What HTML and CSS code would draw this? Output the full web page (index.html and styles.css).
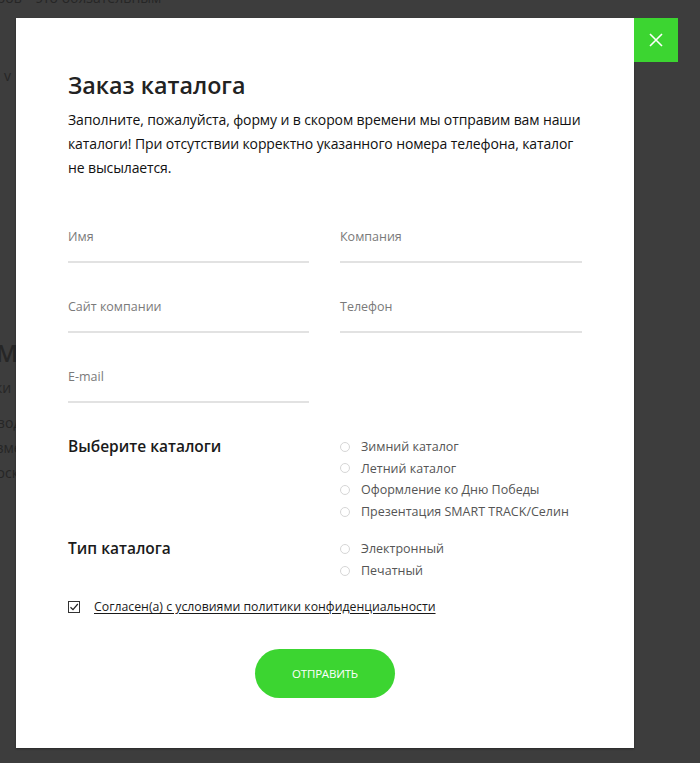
FILE: index.html
```html
<!DOCTYPE html>
<html lang="ru">
<head>
<meta charset="utf-8">
<title>Заказ каталога</title>
<link rel="stylesheet" href="styles.css">
</head>
<body>
<div class="bg-topstrip">
  <p class="bg-top">Подарки для ваших клиентов и партнёров – это обязательным</p>
</div>
<div class="bg-left">
  <p class="bg-v">v</p>
  <h2 class="bg-h">М</h2>
  <p class="bg-line bg-l1">Подарки</p>
  <p class="bg-line bg-l2">Производство</p>
  <p class="bg-line bg-l3">Изменения</p>
  <p class="bg-line bg-l4">Московское</p>
</div>
<div class="overlay">
  <div class="modal">
    <button class="close" type="button" aria-label="Закрыть">
      <svg width="14" height="14" viewBox="0 0 14 14"><path d="M1 1L13 13M13 1L1 13" stroke="#fff" stroke-width="1.6" fill="none"/></svg>
    </button>
    <h1 class="title">Заказ каталога</h1>
    <p class="intro">Заполните, пожалуйста, форму и в скором времени мы отправим вам наши каталоги! При отсутствии корректно указанного номера телефона, каталог не высылается.</p>
    <div class="fields">
      <div class="field"><span class="label">Имя</span></div>
      <div class="field"><span class="label">Компания</span></div>
      <div class="field"><span class="label">Сайт компании</span></div>
      <div class="field"><span class="label">Телефон</span></div>
      <div class="field"><span class="label">E-mail</span></div>
    </div>
    <div class="group group-first">
      <h3 class="group-title">Выберите каталоги</h3>
      <ul class="options">
        <li class="option"><span class="radio"></span>Зимний каталог</li>
        <li class="option"><span class="radio"></span>Летний каталог</li>
        <li class="option"><span class="radio"></span>Оформление ко Дню Победы</li>
        <li class="option"><span class="radio"></span>Презентация SMART TRACK/Селин</li>
      </ul>
    </div>
    <div class="group">
      <h3 class="group-title">Тип каталога</h3>
      <ul class="options">
        <li class="option"><span class="radio"></span>Электронный</li>
        <li class="option"><span class="radio"></span>Печатный</li>
      </ul>
    </div>
    <div class="agree">
      <span class="checkbox">
        <svg width="10" height="10" viewBox="0 0 10 10"><path d="M1.5 5.2L4 7.6L8.8 2" stroke="#222" stroke-width="1.2" fill="none"/></svg>
      </span>
      <span class="agree-text">Согласен(а) с условиями политики конфиденциальности</span>
    </div>
    <div class="actions">
      <button class="submit" type="button">ОТПРАВИТЬ</button>
    </div>
  </div>
</div>
</body>
</html>
```
FILE: styles.css
```css
* { box-sizing: border-box; }
html, body { margin: 0; padding: 0; }
body {
  width: 700px;
  height: 763px;
  overflow: hidden;
  background: #3d3d3d;
  font-family: "Open Sans", "Noto Sans", sans-serif;
  position: relative;
}
.bg-topstrip {
  height: 18px;
  overflow: hidden;
  position: relative;
  color: #262626;
}
.bg-left {
  position: absolute;
  left: 0;
  top: 18px;
  width: 16px;
  height: 745px;
  overflow: hidden;
  color: #262626;
}
.bg-topstrip p, .bg-left p, .bg-left h2 { margin: 0; position: absolute; white-space: nowrap; }
.bg-top { top: -12px; left: -270px; font-size: 14px; }
.bg-v { top: 48px; left: 4px; font-size: 14px; }
.bg-h { top: 318px; left: -4px; font-size: 24px; font-weight: 600; }
.bg-line { font-size: 14px; }
.bg-l1 { top: 360px; left: -48px; }
.bg-l2 { top: 395px; left: -46px; }
.bg-l3 { top: 420px; left: -14px; }
.bg-l4 { top: 445px; left: -16px; }

.overlay {
  position: absolute;
  inset: 0;
  padding: 18px 0 0 16px;
}
.modal {
  position: relative;
  width: 618px;
  height: 730px;
  background: #fff;
  padding: 52px 52px 0 52px;
  box-shadow: 0 1px 2px rgba(0,0,0,0.35);
}
.close {
  position: absolute;
  top: 0;
  right: -44px;
  width: 44px;
  height: 44px;
  border: 0;
  padding: 0;
  background: #3cd531;
  display: flex;
  align-items: center;
  justify-content: center;
}
.title {
  margin: 0;
  font-size: 23.3px;
  line-height: 30px;
  font-weight: 600;
  color: #222;
}
.intro {
  margin: 8px 0 0;
  font-size: 14px;
  line-height: 24px;
  letter-spacing: -0.12px;
  color: #111;
}
.fields {
  margin-top: 37px;
  display: grid;
  grid-template-columns: 241px 242px;
  column-gap: 31px;
  row-gap: 24px;
}
.field {
  padding: 10px 0 14px;
  border-bottom: 2px solid #e2e2e2;
}
.label {
  display: block;
  font-size: 12.5px;
  line-height: 20px;
  color: #7a7a7a;
}
.group {
  margin-top: 15px;
  display: grid;
  grid-template-columns: 272px 1fr;
}
.group-first { margin-top: 32px; }
.group-title {
  margin: 0;
  font-size: 15.5px;
  line-height: 22px;
  font-weight: 600;
  color: #1a1a1a;
}
.options {
  list-style: none;
  margin: 0;
  padding: 1px 0 0;
}
.option {
  display: flex;
  align-items: center;
  font-size: 12.5px;
  line-height: 21.6px;
  color: #555;
}
.radio {
  width: 10px;
  height: 10px;
  border: 1px solid #d6d6d6;
  border-radius: 50%;
  margin-right: 11px;
  flex: none;
}
.agree {
  margin-top: 15px;
  display: flex;
  align-items: center;
  height: 20px;
}
.checkbox {
  width: 12px;
  height: 12px;
  border: 1px solid #333;
  display: flex;
  align-items: center;
  justify-content: center;
  margin-right: 14px;
  flex: none;
}
.agree-text {
  font-size: 12.3px;
  line-height: 20px;
  color: #1a1a1a;
  text-decoration: underline;
  text-underline-offset: 2px;
}
.actions {
  margin-top: 32px;
  display: flex;
  justify-content: center;
}
.submit {
  width: 140px;
  height: 49px;
  border: 0;
  border-radius: 25px;
  background: #3cd531;
  color: #fff;
  font-family: "Open Sans", sans-serif;
  font-size: 11.5px;
  font-weight: 500;
  letter-spacing: -0.2px;
}
```
